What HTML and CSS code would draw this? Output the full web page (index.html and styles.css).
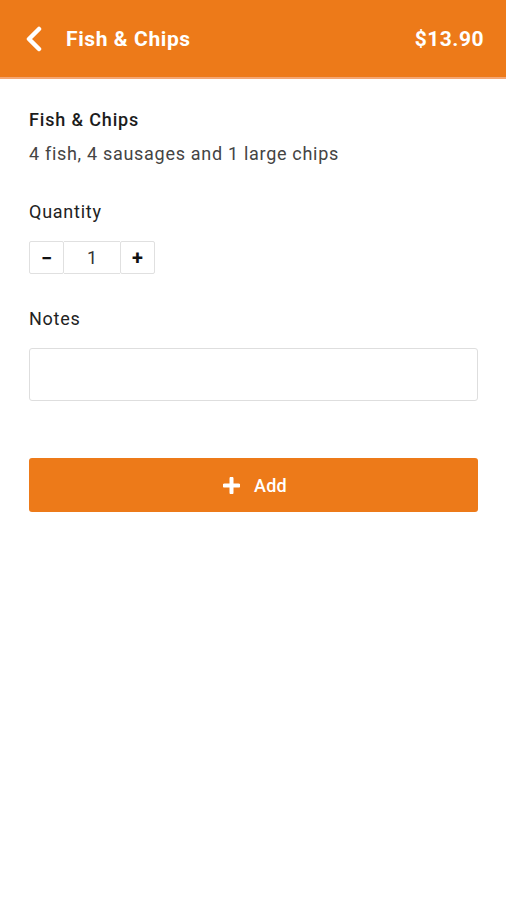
FILE: index.html
```html
<!DOCTYPE html>
<html>
<head>
<meta charset="utf-8">
<link rel="stylesheet" href="styles.css">
</head>
<body>
<header class="topbar">
  <div class="topbar-left">
    <svg class="back" width="20" height="26" viewBox="0 0 20 26"><path d="M15 3 L5 13 L15 23" fill="none" stroke="#fff" stroke-width="4.5" stroke-linecap="round" stroke-linejoin="round"/></svg>
    <span class="title">Fish &amp; Chips</span>
  </div>
  <span class="price">$13.90</span>
</header>
<main class="content">
  <section class="item">
    <div class="item-name">Fish &amp; Chips</div>
    <div class="item-desc">4 fish, 4 sausages and 1 large chips</div>
  </section>
  <section class="field">
    <div class="label">Quantity</div>
    <div class="stepper">
      <div class="step-btn">−</div>
      <div class="step-value">1</div>
      <div class="step-btn">+</div>
    </div>
  </section>
  <section class="field">
    <div class="label">Notes</div>
    <div class="notes"></div>
  </section>
  <button class="add-btn">
    <svg class="plus" width="17" height="17" viewBox="0 0 17 17"><path d="M8.5 1.5 V15.5 M1.5 8.5 H15.5" stroke="#fff" stroke-width="4" stroke-linecap="round"/></svg>
    <span>Add</span>
  </button>
</main>
</body>
</html>
```
FILE: styles.css
```css
* { box-sizing: border-box; }
body {
  margin: 0;
  font-family: Roboto, "Noto Sans", sans-serif;
  background: #fff;
  color: #222;
}
.topbar {
  height: 79px;
  background: #ed7a19;
  border-bottom: 2px solid #f4a673;
  display: flex;
  align-items: center;
  justify-content: space-between;
  padding: 0 22px 0 24px;
  color: #fff;
}
.topbar-left {
  display: flex;
  align-items: center;
}
.back { display: block; margin-right: 22px; }
.title, .price {
  font-size: 21px;
  font-weight: 700;
  letter-spacing: 0.6px;
}
.price { letter-spacing: 0.5px; }
.content {
  padding: 0 28px 0 29px;
}
.item { padding-top: 30px; }
.item-name {
  font-size: 18px;
  font-weight: 500;
  line-height: 22px;
  letter-spacing: 0.85px;
  color: #1c1c1c;
}
.item-desc {
  margin-top: 12px;
  font-size: 18px;
  line-height: 22px;
  letter-spacing: 0.7px;
  color: #444;
}
.field { margin-top: 36px; }
.field + .field { margin-top: 34px; }
.label {
  font-size: 18px;
  line-height: 22px;
  letter-spacing: 0.75px;
  color: #222;
}
.stepper {
  margin-top: 18px;
  display: flex;
  width: 126px;
  height: 33px;
}
.step-btn, .step-value {
  border: 1px solid #e0e0e0;
  display: flex;
  align-items: center;
  justify-content: center;
  height: 100%;
}
.step-btn {
  width: 35px;
  font-size: 20px;
  font-weight: 700;
  color: #111;
  border-radius: 2px;
}
.step-value {
  width: 56px;
  font-size: 18px;
  color: #333;
  border-left: none;
  border-right: none;
}
.notes {
  margin-top: 18px;
  height: 53px;
  border: 1px solid #dedede;
  border-radius: 3px;
}
.add-btn {
  margin-top: 57px;
  width: 100%;
  height: 54px;
  border: none;
  border-radius: 3px;
  background: #ed7a19;
  color: #fff;
  font-family: Roboto, "Noto Sans", sans-serif;
  font-size: 18px;
  font-weight: 500;
  letter-spacing: 0.3px;
  display: flex;
  align-items: center;
  justify-content: center;
  gap: 14px;
  padding: 0 0 0 3px;
}
.plus { display: block; }
```
